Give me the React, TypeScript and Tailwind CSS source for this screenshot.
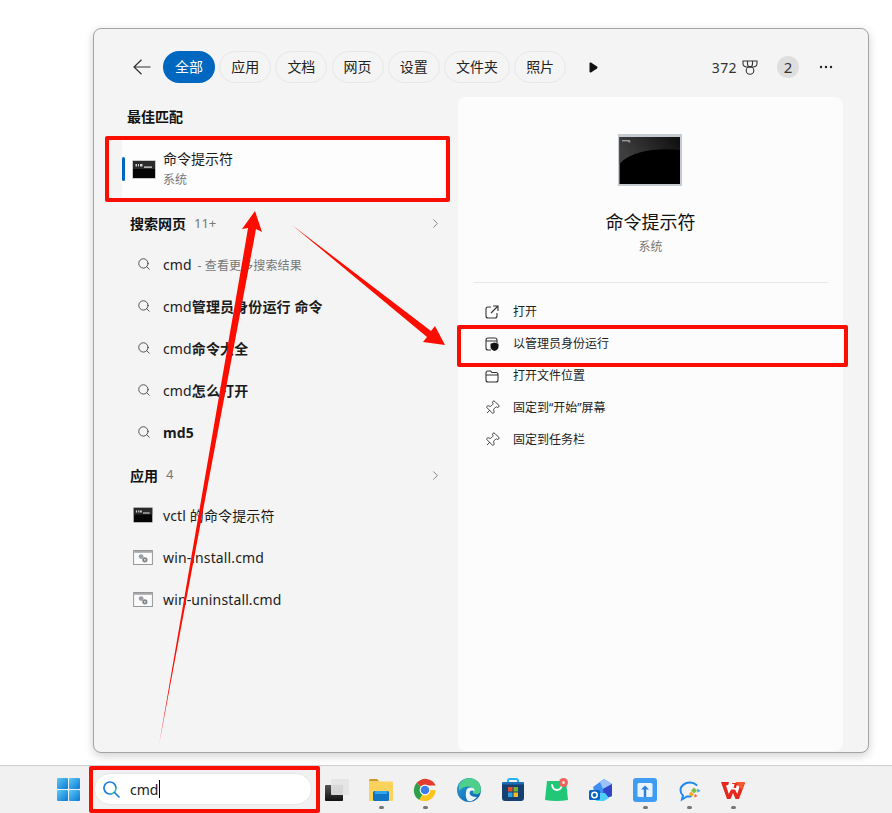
import React from "react";
import { Search, Pin, ChevronRight } from "lucide-react";

const font = "font-['Noto_Sans','Noto_Sans_CJK_SC',sans-serif]";

function CmdIcon({ w = 24, h = 19 }: { w?: number; h?: number }) {
  return (
    <svg width={w} height={h} viewBox="0 0 24 19">
      <rect x="0" y="0" width="24" height="19" rx="1" fill="#c9c9c9" />
      <rect x="1" y="1" width="22" height="17" fill="#050505" />
      <rect x="1" y="1" width="22" height="8" fill="#2a2a2a" />
      <rect x="3.5" y="4" width="1.5" height="2.5" fill="#cfcfcf" />
      <rect x="6" y="4" width="1" height="2.5" fill="#cfcfcf" />
      <rect x="8" y="4" width="2.5" height="2.5" fill="#cfcfcf" />
      <rect x="12" y="6.5" width="8" height="1.2" fill="#e8e8e8" />
    </svg>
  );
}

function ScriptIcon() {
  return (
    <svg width="20" height="15" viewBox="0 0 21 16">
      <rect x="0.5" y="0.5" width="20" height="15" fill="#fbfbfb" stroke="#8f8f8f" />
      <rect x="1" y="1" width="19" height="2" fill="#a8a8a8" />
      <circle cx="8.5" cy="7" r="2.6" fill="#9aa0a6" />
      <circle cx="12.5" cy="10.5" r="2.8" fill="#7f868c" />
      <circle cx="12.5" cy="10.5" r="1" fill="#e4e4e4" />
    </svg>
  );
}

function BigCmdIcon() {
  return (
    <svg width="64" height="52" viewBox="0 0 64 52">
      <defs>
        <linearGradient id="bigc" x1="0" y1="0.3" x2="1" y2="0">
          <stop offset="0" stopColor="#3e3e3e" />
          <stop offset="1" stopColor="#0e0e0e" />
        </linearGradient>
      </defs>
      <rect x="0" y="0" width="64" height="52" fill="#c6cbd2" />
      <rect x="1.5" y="3" width="60.5" height="47" fill="#000" />
      <path d="M1.5 3H62V16C40 14 14 16 1.5 30Z" fill="url(#bigc)" />
      <rect x="4" y="6" width="8" height="1.4" fill="#9a9a9a" />
      <rect x="10" y="7.5" width="2.5" height="0.8" fill="#bdbdbd" />
    </svg>
  );
}

function Row({ children, icon }: { children: React.ReactNode; icon?: React.ReactNode }) {
  return (
    <div className="flex h-[42px] items-center">
      <div className={`flex w-[69px] justify-end ${icon ? "pr-[10px]" : "pr-[12px]"}`}>
        {icon ?? <Search size={14} strokeWidth={1.4} color="#333" />}
      </div>
      <div className="text-[14px] tracking-[0.13px] text-[#1c1c1c]">{children}</div>
    </div>
  );
}

function GroupHeader({ title, count, cls }: { title: string; count: string; cls: string }) {
  return (
    <div className={`flex items-center pl-[36px] pr-[15px] ${cls}`}>
      <span className="text-[14px] font-bold text-[#111]">{title}</span>
      <span className="ml-[8px] text-[13px] text-[#777]">{count}</span>
      <ChevronRight size={15} strokeWidth={1.4} color="#777" className="ml-auto" />
    </div>
  );
}

function Action({ icon, label }: { icon: React.ReactNode; label: string }) {
  return (
    <div className="flex h-[32px] items-center pl-[26px]">
      <div className="flex w-[16px] justify-center">{icon}</div>
      <span className="ml-[13px] text-[12px] text-[#222]">{label}</span>
    </div>
  );
}

const PinI = <Pin size={16} strokeWidth={1.2} color="#222" className="rotate-45" />;

function TaskIcon({ children, dot }: { children: React.ReactNode; dot?: boolean }) {
  return (
    <div className="flex w-[24px] flex-col items-center">
      <div className="h-[24px] w-[24px]">{children}</div>
      {dot && <div className="mt-[4px] h-[3px] w-[5px] rounded-full bg-[#777]" />}
    </div>
  );
}

const tabs = ["应用", "文档", "网页", "设置", "文件夹", "照片"];

export default function App() {
  return (
    <div className={`relative flex h-[813px] w-full flex-col overflow-hidden bg-white pt-[28px] ${font}`}>
      {/* Search panel */}
      <div className="ml-[93px] flex h-[725px] w-[776px] flex-col rounded-[8px] border border-[#a3a3a3] bg-[#f4f4f4] shadow-[0_3px_10px_rgba(0,0,0,0.18)]">
        <div className="flex h-[68px] shrink-0 items-start pl-[39px] pr-[35px] pt-[22px]">
          <div className="flex h-[32px] w-[18px] items-center">
            <svg width="18" height="16" viewBox="0 0 18 16" fill="none" stroke="#333" strokeWidth="1.2">
              <path d="M17.5 8H1M8.5 0.7 1 8l7.5 7.3" />
            </svg>
          </div>
          <div className="ml-[12px] flex gap-[4.2px]">
            <div className="flex h-[32px] w-[52px] items-center justify-center rounded-full bg-[#0067c0] pb-[2px] text-[14px] text-white">全部</div>
            {tabs.map((t) => (
              <div key={t} className="flex h-[32px] items-center justify-center rounded-full border border-[#e7e7e7] px-[11px] pb-[2px] text-[14px] text-[#222]">
                {t}
              </div>
            ))}
          </div>
          <div className="ml-[23px] flex h-[32px] items-center">
            <svg width="9" height="11" viewBox="0 0 9 11"><path d="M0.5 1.5Q0.5 0 2 0.6L8 4.4Q9 5.5 8 6.6L2 10.4Q0.5 11 0.5 9.5Z" fill="#111" /></svg>
          </div>
          <div className="ml-auto flex h-[32px] items-center">
            <span className="text-[14px] tracking-[0.4px] text-[#333]">372</span>
            <svg className="ml-[5px]" width="16" height="15" viewBox="0 0 16 15" fill="none" stroke="#333" strokeWidth="1.1">
              <path d="M1 1H15V3.5Q15 6.5 11.5 7H4.5Q1 6.5 1 3.5Z" />
              <path d="M5.5 1V4Q5.5 6.5 8 7Q10.500 6.500 10.500 4V1" />
              <circle cx="8" cy="10.5" r="3.8" />
            </svg>
            <div className="ml-[19px] flex h-[22px] w-[22px] items-center justify-center rounded-full bg-[#dedede] text-[15px] text-[#333]">2</div>
            <svg className="ml-[20px]" width="14" height="4" viewBox="0 0 14 4" fill="#222">
              <circle cx="2" cy="2" r="1.2" /><circle cx="7" cy="2" r="1.2" /><circle cx="12" cy="2" r="1.2" />
            </svg>
          </div>
        </div>

        <div className="flex min-h-0 flex-1">
          <div className="w-[364px] shrink-0">
            <div className="flex h-[42px] items-center pb-[3px] pl-[33px] text-[14px] font-bold text-[#111]">最佳匹配</div>
            <div className="ml-[28px] flex h-[60px] w-[323px] items-center bg-[#fdfdfd]">
              <div className="h-[24px] w-[3px] rounded-full bg-[#0067c0]" />
              <div className="ml-[7px]"><CmdIcon /></div>
              <div className="ml-[7px] flex flex-col pt-[1px]">
                <span className="text-[14px] leading-[20px] text-[#1c1c1c]">命令提示符</span>
                <span className="mt-[1px] text-[12px] leading-[20px] text-[#777]">系统</span>
              </div>
            </div>
            <GroupHeader title="搜索网页" count="11+" cls="mt-[4px] h-[40px] pt-[1px]" />
            <Row>cmd <span className="ml-[2px] text-[12px] text-[#777]">- 查看更多搜索结果</span></Row>
            <Row>cmd<b>管理员身份运行 命令</b></Row>
            <Row>cmd<b>命令大全</b></Row>
            <Row>cmd<b>怎么打开</b></Row>
            <Row><b>md5</b></Row>
            <GroupHeader title="应用" count="4" cls="h-[41px] pt-[3px]" />
            <Row icon={<CmdIcon w={20} h={16} />}>vctl 的命令提示符</Row>
            <Row icon={<ScriptIcon />}>win-install.cmd</Row>
            <Row icon={<ScriptIcon />}>win-uninstall.cmd</Row>
          </div>

          <div className="mb-[1px] flex w-[385px] shrink-0 flex-col rounded-[8px] bg-[#fcfcfc]">
            <div className="mt-[37px] flex justify-center pr-[1px]"><BigCmdIcon /></div>
            <div className="mt-[23px] text-center text-[18px] leading-[26px] text-[#111]">命令提示符</div>
            <div className="mt-[3px] text-center text-[12px] leading-[18px] text-[#777]">系统</div>
            <div className="mx-[15px] mt-[26px] h-px bg-[#e8e8e8]" />
            <div className="mt-[13px] flex flex-col">
              <Action
                label="打开"
                icon={
                  <svg width="14" height="14" viewBox="0 0 14 14" fill="none" stroke="#333" strokeWidth="1.1">
                    <path d="M6 2H3Q1 2 1 4V11Q1 13 3 13H10Q12 13 12 11V8M8 1H13V6M13 1 6 8" />
                  </svg>
                }
              />
              <Action
                label="以管理员身份运行"
                icon={
                  <svg width="14" height="14" viewBox="0 0 14 14">
                    <path d="M6 13H3Q1 13 1 11V3Q1 1 3 1H10Q12 1 12 3V6M1 4H12" fill="none" stroke="#333" strokeWidth="1.1" />
                    <path d="M9.5 5.5 13.5 6.8V10Q13.5 12.6 9.5 14Q5.5 12.6 5.5 10V6.8Z" fill="#111" />
                  </svg>
                }
              />
              <Action
                label="打开文件位置"
                icon={
                  <svg width="14" height="13" viewBox="0 0 14 13" fill="none" stroke="#333" strokeWidth="1.1">
                    <path d="M1 3Q1 1 3 1H5.5L7 2.5H11Q13 2.5 13 4.5V10Q13 12 11 12H3Q1 12 1 10ZM1 5H13" />
                  </svg>
                }
              />
              <Action label="固定到“开始”屏幕" icon={PinI} />
              <Action label="固定到任务栏" icon={PinI} />
            </div>
          </div>
        </div>
      </div>

      {/* Taskbar */}
      <div className="mt-[12px] flex h-[48px] items-start border-t border-[#cfcfcf] bg-[#f1f1f1] pl-[57px] pt-[7px]">
        <div className="mt-[5px] h-[23px] w-[23px]">
          <svg width="23" height="23" viewBox="0 0 23 23">
            <defs>
              <linearGradient id="win" x1="0" y1="0" x2="1" y2="1">
                <stop offset="0" stopColor="#5ccbf5" />
                <stop offset="1" stopColor="#0a78d4" />
              </linearGradient>
            </defs>
            <rect x="0" y="0" width="11" height="11" rx="1" fill="url(#win)" />
            <rect x="12" y="0" width="11" height="11" rx="1" fill="url(#win)" />
            <rect x="0" y="12" width="11" height="11" rx="1" fill="url(#win)" />
            <rect x="12" y="12" width="11" height="11" rx="1" fill="url(#win)" />
          </svg>
        </div>
        <div className="ml-[14px] flex h-[32px] w-[218px] items-center rounded-full border border-[#e6e6e6] bg-white pl-[8px] text-[14px] text-[#222]">
          <svg width="17" height="17" viewBox="0 0 17 17" fill="none" strokeWidth="1.7" strokeLinecap="round">
            <path d="M13 7A6 6 0 1 0 8.5 12.8" stroke="#1e7fd8" />
            <path d="M8.5 12.8A6 6 0 0 0 13 7" stroke="#3fc0a0" />
            <path d="M11.5 11.5 16 16" stroke="#1e7fd8" />
          </svg>
          <span className="ml-[10px]">cmd</span>
          <span className="ml-px h-[18px] w-px bg-black" />
        </div>
        <div className="ml-[13px] mt-[5px] flex gap-[20px]">
          <TaskIcon>
            <svg width="24" height="24" viewBox="0 0 24 24">
              <defs>
                <linearGradient id="tv" x1="0" y1="0" x2="0" y2="1">
                  <stop offset="0" stopColor="#555" /><stop offset="1" stopColor="#111" />
                </linearGradient>
              </defs>
              <rect x="0" y="7" width="18" height="16" rx="1" fill="url(#tv)" />
              <rect x="6" y="1" width="18" height="16" rx="1" fill="#e4e4e4" fillOpacity="0.92" />
            </svg>
          </TaskIcon>
          <TaskIcon dot>
            <svg width="24" height="24" viewBox="0 0 24 24">
              <path d="M0 2.5Q0 1 1.5 1H8L10.5 3.5H0Z" fill="#d09a20" />
              <rect x="0" y="3.5" width="24" height="19.5" rx="1" fill="#fbd35c" />
              <rect x="4" y="13" width="16" height="10" rx="1.5" fill="#0f74c4" />
              <rect x="6" y="13" width="12" height="3" fill="#2fa6ea" />
            </svg>
          </TaskIcon>
          <TaskIcon dot>
            <svg width="24" height="24" viewBox="0 0 24 24">
              <path d="M12 12 3.4 5A11.5 11.5 0 0 1 22.7 7.5H12Z" fill="#e33b2e" />
              <path d="M12 12 6.3 22A11.5 11.5 0 0 1 3.4 5Z" fill="#2fa04a" />
              <path d="M12 12H22.7A11.5 11.5 0 0 1 6.3 22Z" fill="#fbc51b" />
              <circle cx="12" cy="12" r="5.4" fill="#fff" />
              <circle cx="12" cy="12" r="4.3" fill="#3b7de9" />
            </svg>
          </TaskIcon>
          <TaskIcon>
            <svg width="24" height="24" viewBox="0 0 24 24">
              <defs>
                <linearGradient id="eg" x1="0" y1="0" x2="1" y2="1">
                  <stop offset="0" stopColor="#2aa0d8" /><stop offset="1" stopColor="#0b60b0" />
                </linearGradient>
              </defs>
              <circle cx="12" cy="12" r="12" fill="url(#eg)" />
              <path d="M2 7A11.5 11.5 0 0 1 24 11Q24 17 18 16Q14.500 15.500 16.500 12Q15 8 10 8.500Q5 9 2 13Z" fill="#4fd08a" />
              <path d="M9 14.500Q9 9.500 14 9.500Q18 10 17.500 13Q13 11.500 12.500 15Q13 19 20 19Q16 24 11 23Q8 20 9 14.500Z" fill="#fff" fillOpacity="0.92" />
            </svg>
          </TaskIcon>
          <TaskIcon>
            <svg width="24" height="24" viewBox="0 0 24 24">
              <path d="M7 7V3Q7 1 9 1H15Q17 1 17 3V7" fill="none" stroke="#22b4ec" strokeWidth="2" />
              <path d="M1 5H23V20Q23 23 20 23H4Q1 23 1 20Z" fill="#16406f" />
              <rect x="1" y="4" width="22" height="2.500" rx="1" fill="#1f6fb5" />
              <rect x="7" y="9" width="4.500" height="4.500" fill="#e5502c" />
              <rect x="12.500" y="9" width="4.500" height="4.500" fill="#6cb52d" />
              <rect x="7" y="14.500" width="4.500" height="4.500" fill="#2c9fe5" />
              <rect x="12.500" y="14.500" width="4.500" height="4.500" fill="#f6b91c" />
            </svg>
          </TaskIcon>
          <TaskIcon>
            <svg width="24" height="24" viewBox="0 0 24 24">
              <path d="M2 3H21L23 22Q12 24 0 22Z" fill="#1fc777" />
              <path d="M7 7Q8 12 12 12Q16 12 17 7" fill="none" stroke="#fff" strokeWidth="1.800" strokeLinecap="round" />
              <circle cx="18.500" cy="4.500" r="4.500" fill="#f0625c" />
              <circle cx="18.500" cy="4.500" r="1.500" fill="#ffdcd8" />
            </svg>
          </TaskIcon>
          <TaskIcon>
            <svg width="24" height="24" viewBox="0 0 24 24">
              <path d="M4 9 15 1 23 6V18L15 21 7 21Z" fill="#3f8ff0" />
              <path d="M11 4 15 1 23 6 14 11Z" fill="#9cc2f7" />
              <path d="M14 11 23 6V18L15 21Z" fill="#3346c9" />
              <path d="M9 15H16L20 20 15 23 7 23Z" fill="#4fd0f8" />
              <rect x="0" y="12" width="11" height="10" rx="1.500" fill="#0a62c4" />
              <circle cx="5.500" cy="17" r="2.700" fill="none" stroke="#fff" strokeWidth="1.500" />
            </svg>
          </TaskIcon>
          <TaskIcon dot>
            <svg width="24" height="24" viewBox="0 0 24 24">
              <rect x="0" y="0" width="24" height="24" rx="3" fill="#3f9cf3" />
              <rect x="4.500" y="5" width="15" height="14" rx="1.500" fill="#e8f3fe" />
              <path d="M12 7.500 16 11.500H13.200V19H10.800V11.500H8Z" fill="#2c80d8" />
            </svg>
          </TaskIcon>
          <TaskIcon dot>
            <svg width="24" height="24" viewBox="0 0 24 24">
              <path d="M19.500 7A9 7.500 0 1 0 6 17.500L5 21.500 10 18.500Q12 18.800 14 18.300" fill="none" stroke="#1f8bf0" strokeWidth="2" strokeLinecap="round" />
              <path d="M17 9.500 20 12.500 17 15.500 14 12.500Z" fill="#7bc043" />
              <path d="M20.500 10.500 23.500 13 20 14.500Z" fill="#3fa9f5" />
              <path d="M14 13.500 17 16.500 14.500 19 12 16Z" fill="#f5a623" />
              <path d="M18 16 20.500 18 17 19.500Z" fill="#ef5a3a" />
            </svg>
          </TaskIcon>
          <TaskIcon dot>
            <svg width="24" height="24" viewBox="0 0 24 24">
              <path d="M0 4H8L7 8 12 8 11 5H24L18 21H14.500L12 15 9.500 21H6Z" fill="#e5281f" />
              <path d="M5 7.500 7.800 16 10 11.500H14L16.300 16 19 7.500H15.500L15 10H12.500L13.500 6H11" fill="#fff" />
              <path d="M14.500 4H24L21 12Z" fill="#f25a2c" />
            </svg>
          </TaskIcon>
        </div>
      </div>

      {/* Annotations laid over the screenshot */}
      <div className="absolute left-[105px] top-[136px] h-[66px] w-[345px] rounded-[2px] border-[4px] border-[#fb0d00]" />
      <div className="absolute left-[457px] top-[325px] h-[42px] w-[391px] rounded-[2px] border-[4px] border-[#fb0d00]" />
      <div className="absolute left-[89px] top-[766px] h-[47px] w-[231px] rounded-[2px] border-[4px] border-[#fb0d00]" />
      <svg className="absolute left-0 top-0" width="892" height="813" viewBox="0 0 892 813">
        <polygon fill="#fb0d00" points="159,745 208,460 246,240 248,228 242,229 255,211 262,232 256,229 254,240 212.5,460" />
        <polygon fill="#fb0d00" points="292,225 431,331 435,326 445,345 423,342 427,337" />
      </svg>
    </div>
  );
}
